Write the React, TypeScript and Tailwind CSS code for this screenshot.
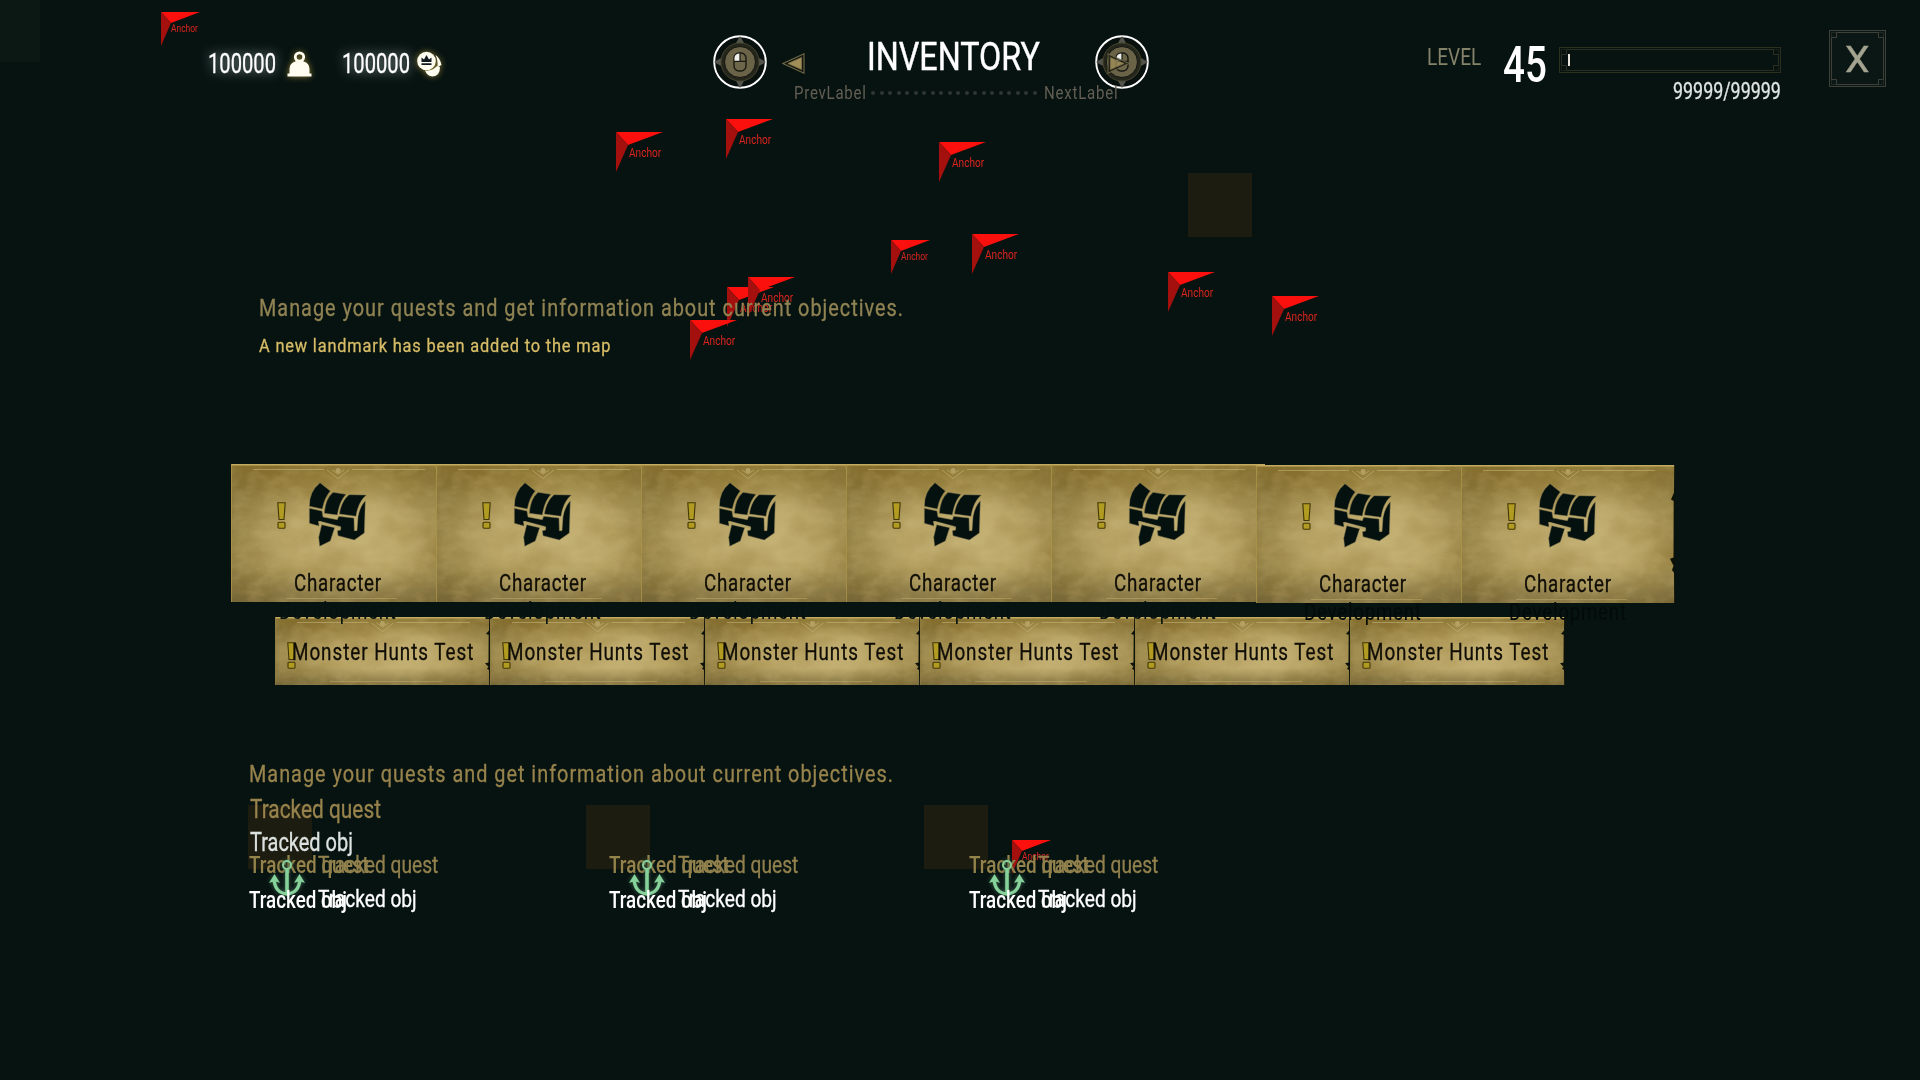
import { useLayoutEffect, useRef, useState } from "react"
import type { ReactNode } from "react"
import { clsx } from "clsx"

interface FitTextProps {
  width: number
  className?: string
  children: string
}

// Condenses a line of text horizontally so that it fills the given width.
function FitText({ width, className, children }: FitTextProps) {
  const ref = useRef<HTMLSpanElement>(null)
  const [scale, setScale] = useState(1)

  useLayoutEffect(() => {
    if (ref.current) setScale(width / ref.current.offsetWidth)
  }, [width, children])

  return (
    <span className={clsx("block shrink-0 leading-none", className)} style={{ width }}>
      <span ref={ref} className="inline-block origin-left whitespace-nowrap align-top" style={{ transform: `scaleX(${scale})` }}>
        {children}
      </span>
    </span>
  )
}

const anchors = [
  { x: 161, y: 12, small: true },
  { x: 616, y: 132 },
  { x: 726, y: 119 },
  { x: 939, y: 142 },
  { x: 891, y: 240, small: true },
  { x: 972, y: 234 },
  { x: 727, y: 287 },
  { x: 748, y: 277 },
  { x: 690, y: 320 },
  { x: 1168, y: 272 },
  { x: 1272, y: 296 },
  { x: 1012, y: 840, small: true },
]

const slots = [
  { x: 1188, y: 173 },
  { x: 248, y: 805 },
  { x: 586, y: 805 },
  { x: 924, y: 805 },
]

function AnchorPin({ small }: { small?: boolean }) {
  return (
    <div className={clsx("relative", small ? "h-[34px] w-[39px]" : "h-10 w-[47px]")}>
      <svg viewBox="0 0 47 40" className="block h-full w-full" preserveAspectRatio="none">
        <path d="M0 0H47L12 13Z" fill="#fb100d" />
        <path d="M0 0L12 13L0 40Z" fill="#a3100d" />
      </svg>
      <div className={clsx("absolute text-[#dc241e]", small ? "left-2.5 top-[12px] text-[10px]" : "left-[12.5px] top-[15px] text-[12px]")}>
        <FitText width={small ? 27 : 32}>Anchor</FitText>
      </div>
    </div>
  )
}

function WeightIcon() {
  return (
    <svg viewBox="0 0 25 26" className="h-[26px] w-[25px] drop-shadow-[0_0_3px_#8a7a30]">
      <circle cx="12.5" cy="6" r="4.2" fill="none" stroke="#fffef0" strokeWidth="2.8" />
      <path d="M9 9.5H16L16.5 10.500Q22.500 12 22.500 18V22.500H24.500V25.500H.5V22.500H2.500V18Q2.500 12 8.500 10.500Z" fill="#fffef0" />
    </svg>
  )
}

function CoinsIcon() {
  return (
    <svg viewBox="0 0 26 26" className="h-[26px] w-[26px] drop-shadow-[0_0_3px_#8a7a30]">
      <path d="M18.500 4Q23 7 24.500 14L20.500 16Q21 9 18.500 4Z" fill="#fffef0" />
      <path d="M8 19.500Q15 20.500 20 15L23 16Q23 25 15.500 25.500Q10 25 8 19.500Z" fill="#fffef0" />
      <circle cx="9.500" cy="10" r="9.300" fill="#fffef0" />
      <path d="M4.500 6.500L7 8.500L9.500 4L12 8.500L14.500 6.500V11H4.500ZM4.500 12.200H14.500V14H4.500Z" fill="#101a20" />
    </svg>
  )
}

function MouseMedallion() {
  return (
    <svg viewBox="0 0 54 54" className="block h-[54px] w-[54px] shrink-0">
      <circle cx="27" cy="27" r="25.800" fill="#09110f" stroke="#fff" strokeWidth="1.900" />
      <g fill="#53544b">
        <path d="M27 1L31 8H23ZM27 53L31 46H23ZM1 27L8 23V31ZM53 27L46 23V31Z" />
      </g>
      <circle cx="27" cy="27" r="19" fill="#24251b" stroke="#47462f" />
      <circle cx="27" cy="27" r="15.500" fill="#6b6347" stroke="#111510" strokeWidth="1" />
      <rect x="21" y="18" width="12" height="18" rx="5" fill="#6e6649" stroke="#181a13" strokeWidth="1.400" />
      <path d="M27 18.500V26H21.500V23Q21.500 18.500 27 18.500Z" fill="#f0f0ec" />
      <path d="M21 26.300H33M27 18V26" stroke="#181a13" strokeWidth="1.200" />
    </svg>
  )
}

function ArrowIcon({ className }: { className?: string }) {
  return (
    <svg viewBox="0 0 23 21" className={clsx("block h-[21px] w-[23px] shrink-0", className)}>
      <path d="M.8 10.500L22 .8V20.200Z" fill="#16180f" stroke="#6f6848" strokeWidth="1.100" />
      <path d="M6 10.500L19.500 4.500V16.500Z" fill="#a08d58" stroke="#7f7349" strokeWidth=".8" />
    </svg>
  )
}

function ChestIcon() {
  return (
    <svg viewBox="0 0 240 300" className="block h-[100px] w-20">
      <g fill="#04110f" stroke="#8a7f54" strokeWidth="1.500" strokeLinejoin="round">
        <path d="M60 68L91 93Q74 112 67 147L28 139Q27 95 60 68Z" />
        <path d="M99 97L138 103Q118 125 112 165L73 160Q75 118 99 97Z" />
        <path d="M147 104L199 105Q174 126 168 169L118 162Q123 124 147 104Z" />
        <path d="M28 145L66 153L69 171L112 179L116 169L162 174L163 212H171L174 170Q180 138 196 122L193 219L163 240L114 227L112 212L122 210V200L60 184L56 187L57 198L28 190Z" />
        <path d="M65 194L104 203L91 243L59 259L56 232Z" />
      </g>
      <path d="M55 185L121 204" stroke="#b3a36a" strokeWidth="4" />
    </svg>
  )
}

function QuestMark({ className }: { className?: string }) {
  return (
    <svg viewBox="0 0 9 27" className={clsx("absolute z-10 h-[27px] w-[9px]", className)}>
      <g fill="#b19b20" stroke="#423707" strokeWidth="1.100">
        <path d="M.8.8H8.200L7 17.500H2Z" />
        <rect x="1" y="20.200" width="7" height="6" rx="1" />
      </g>
    </svg>
  )
}

interface ParchmentProps {
  width: number
  height: number
  torn?: boolean
  last?: boolean
}

function Parchment({ width, height, torn, last }: ParchmentProps) {
  const mid = width / 2
  return (
    <svg viewBox={`0 0 ${width} ${height}`} className="absolute inset-0 block h-full w-full">
      <rect width={width} height={height} fill="url(#paper)" />
      <rect width={width} height={height} fill="url(#paper-shade)" />
      <rect width={width} height={height} filter="url(#paper-stain)" />
      <rect width={width} height={height} filter="url(#paper-grain)" />
      <path d={`M0 .7H${width}`} stroke="#c2ab60" strokeWidth="1.400" />
      <path d={`M22 5.500H${mid - 14}M${mid + 14} 5.500H${width - 20}M${mid - 11} 6L${mid} 14.500L${mid + 11} 6M${mid - 6} 6L${mid} 10L${mid + 6} 6`} fill="none" stroke="#cfbd82" strokeOpacity=".5" />
      <circle cx={mid} cy="6.500" r="2.500" fill="#c8b67c" fillOpacity=".6" />
      <path d={`M55 ${height - 3.500}H${width - 48}`} stroke="#bda768" strokeOpacity=".55" />
      <path d={`M.5 0V${height}`} stroke={torn ? "#8f7c40" : "#b09948"} strokeOpacity=".7" />
      {(torn || last) && (
        <path
          d={`M${width} 0V${height}H${width - 0.8}L${width - 1} ${height * 0.78}L${width - 3} ${height * 0.76}L${width - 1.5} ${height * 0.73}L${width - 5} ${height * 0.68}L${width - 1.5} ${height * 0.67}L${width - 1.3} ${height * 0.26}L${width - 4} ${height * 0.25}L${width - 1} ${height * 0.2}L${width - 0.8} 0Z`}
          fill="#0d1209"
        />
      )}
    </svg>
  )
}

function PaperDefs() {
  return (
    <svg className="absolute h-0 w-0">
      <defs>
        <radialGradient id="paper" cx=".54" cy=".56" r=".64">
          <stop offset="0" stopColor="#c5b276" />
          <stop offset=".45" stopColor="#baa667" />
          <stop offset=".8" stopColor="#9a874b" />
          <stop offset="1" stopColor="#83713b" />
        </radialGradient>
        <linearGradient id="paper-shade" x1="0" y1="0" x2="0" y2="1">
          <stop offset="0" stopColor="#8d742a" stopOpacity=".5" />
          <stop offset=".3" stopColor="#8d752c" stopOpacity="0" />
          <stop offset=".75" stopColor="#6d6036" stopOpacity="0" />
          <stop offset="1" stopColor="#6d6036" stopOpacity=".55" />
        </linearGradient>
        <filter id="paper-stain" x="0" y="0" width="100%" height="100%" colorInterpolationFilters="sRGB">
          <feTurbulence type="fractalNoise" baseFrequency=".018 .026" numOctaves="3" seed="8" />
          <feColorMatrix values="0 0 0 0 .5  0 0 0 0 .39  0 0 0 0 .12  .8 0 0 0 -.33" />
        </filter>
        <filter id="paper-grain" x="0" y="0" width="100%" height="100%" colorInterpolationFilters="sRGB">
          <feTurbulence type="fractalNoise" baseFrequency=".06 .09" numOctaves="4" seed="3" />
          <feColorMatrix values="0 0 0 0 .82  0 0 0 0 .74  0 0 0 0 .5  0 .5 0 0 -.2" />
        </filter>
      </defs>
    </svg>
  )
}

function CategoryTile({ index }: { index: number }) {
  const lowered = index > 4
  return (
    <div className={clsx("relative -mr-[9px] h-[138px] w-[214px] shrink-0", lowered && "mt-px")}>
      <Parchment width={214} height={138} last={index === 6} />
      <QuestMark className="left-[46px] top-[38px]" />
      <div className="relative -mt-1 ml-[69px]">
        <ChestIcon />
      </div>
      {/* second line of the label hangs below the tile */}
      <div className="relative flex flex-col items-center gap-[5px] pt-[11.500px] text-[23px] tracking-[.04em]">
        <FitText width={88} className="text-[#100e06] [-webkit-text-stroke:.3px]">Character</FitText>
        <FitText width={118} className={lowered ? "text-[#030b08]" : "text-[#061210]"}>Development</FitText>
      </div>
    </div>
  )
}

function HuntTile({ children }: { children: string }) {
  return (
    <div className="relative h-[68px] w-[215px] shrink-0 pl-[17px] pt-6">
      <Parchment width={215} height={68} torn />
      <QuestMark className="left-3 top-[25px]" />
      <FitText width={182} className="relative z-20 text-[23px] tracking-[.05em] text-[#100e06] [-webkit-text-stroke:.3px]">{children}</FitText>
    </div>
  )
}

function GreenAnchor() {
  return (
    <svg viewBox="0 0 40 38" className="absolute left-[18px] top-[6px] h-[38px] w-10 drop-shadow-[0_0_2px_#3f6a50]">
      <g fill="none" stroke="#87d29a">
        <circle cx="20" cy="5" r="4" strokeWidth="2" />
        <path d="M20 9V35" strokeWidth="3.600" />
        <path d="M7 19Q8 33 20 34Q32 33 33 19" strokeWidth="3.400" />
      </g>
      <path d="M7.500 14L13 23Q8 20 2 23ZM32.500 14L38 23Q32 20 27 23Z" fill="#87d29a" />
    </svg>
  )
}

function TrackedEntry() {
  return (
    <div className="relative w-[360px] shrink-0">
      <div className="relative text-[23px]">
        <FitText width={120} className="font-medium text-[#94834b]">Tracked quest</FitText>
        <div className="absolute left-[69px] top-0 text-[#91804d] [-webkit-text-stroke:.3px]">
          <FitText width={120}>Tracked quest</FitText>
        </div>
      </div>
      <GreenAnchor />
      <div className="relative mt-3 text-[23px] text-white">
        <FitText width={98} className="font-medium">Tracked obj</FitText>
        <div className="absolute -top-px left-[69px] [-webkit-text-stroke:.3px]">
          <FitText width={99}>Tracked obj</FitText>
        </div>
      </div>
    </div>
  )
}

function NotchedFrame({ width, height, color, children }: { width: number; height: number; color: string; children?: ReactNode }) {
  const r = width - 2.5
  const b = height - 2.5
  return (
    <svg viewBox={`0 0 ${width} ${height}`} className="absolute inset-0 block h-full w-full">
      <g fill="none" stroke={color}>
        <rect x=".5" y=".5" width={width - 1} height={height - 1} />
        <path d={`M7.500 2.500H${r - 5}V7.500H${r}V${b - 5}H${r - 5}V${b}H7.500V${b - 5}H2.500V7.500H7.500Z`} />
        <path d={`M2.500 2.500H7.500V7.500H2.500ZM${r - 5} 2.500H${r}V7.500H${r - 5}ZM2.500 ${b - 5}H7.500V${b}H2.500ZM${r - 5} ${b - 5}H${r}V${b}H${r - 5}Z`} strokeOpacity=".45" />
      </g>
      {children}
    </svg>
  )
}

function Header() {
  return (
    <header className="relative flex h-28 shrink-0 items-start pl-[208px] text-white">
      <FitText width={68} className="mt-[51px] text-[27px] [-webkit-text-stroke:.3px] [text-shadow:0_0_14px_#a9b4b0]">100000</FitText>
      <div className="ml-[11px] mt-[51px]"><WeightIcon /></div>
      <FitText width={68} className="ml-[30px] mt-[51px] text-[27px] [-webkit-text-stroke:.3px] [text-shadow:0_0_14px_#a9b4b0]">100000</FitText>
      <div className="ml-[7px] mt-[51px]"><CoinsIcon /></div>

      <nav className="ml-[270px] mt-[35px] w-[436px] shrink-0">
        <div className="flex h-[54px] items-start">
          <MouseMedallion />
          <ArrowIcon className="ml-[15px] mt-[18px]" />
          <FitText width={173} className="ml-[62px] mt-[3px] text-[39px] [-webkit-text-stroke:.4px]">INVENTORY</FitText>
          <div className="relative ml-[55px]">
            <MouseMedallion />
            <ArrowIcon className="absolute left-3 top-[18px] -scale-x-100 opacity-80" />
          </div>
        </div>
        <div className="relative -mt-1 flex items-start pl-[81px] text-[17.5px] tracking-[.05em] text-[#635f54]">
          <FitText width={73}>PrevLabel</FitText>
          <div className="ml-1 mt-[6px] flex gap-[4.500px]">
            {Array.from({ length: 20 }, (_, i) => (
              <span key={i} className="h-1 w-1 shrink-0 rounded-full bg-[#2f3633]" />
            ))}
          </div>
          <FitText width={74} className="ml-[7px]">NextLabel</FitText>
        </div>
      </nav>

      <FitText width={54} className="ml-[278px] mt-[45px] text-[24px] text-[#85836a]">LEVEL</FitText>
      <FitText width={44} className="ml-[22px] mt-10 text-[50px] font-medium">45</FitText>
      <div className="ml-3 mt-[47px] flex w-[222px] shrink-0 flex-col items-end">
        <div className="relative h-[26px] w-full pl-[9px] pt-[7px]">
          <NotchedFrame width={222} height={26} color="#2c2f1f" />
          <div className="h-3 w-0.5 bg-[#e8e6da]" />
        </div>
        <FitText width={108} className="mt-[7px] text-[23px] text-[#dfe5e2] [-webkit-text-stroke:.3px]">99999/99999</FitText>
      </div>
      <button type="button" className="relative ml-12 mt-[30px] flex h-[57px] w-[57px] shrink-0 justify-center bg-[#0a1715] pr-[2px] pt-3">
        <NotchedFrame width={57} height={57} color="#3f4138" />
        <FitText width={25} className="relative text-[36px] text-[#a3a390] [-webkit-text-stroke:.4px]">X</FitText>
      </button>
    </header>
  )
}

export default function App() {
  return (
    <div className="relative flex h-[1080px] w-[1920px] flex-col overflow-hidden bg-[#071311] font-['Roboto',sans-serif]">
      <PaperDefs />
      <div className="absolute left-0 top-0 h-[62px] w-10 bg-[#0b1814]" />
      {slots.map((s) => (
        <div key={s.x} className="absolute h-16 w-16 bg-[#1c1c11]" style={{ left: s.x, top: s.y }} />
      ))}
      {anchors.map((a) => (
        <div key={`${a.x}-${a.y}`} className="absolute" style={{ left: a.x, top: a.y }}>
          <AnchorPin small={a.small} />
        </div>
      ))}

      <Header />

      <main className="relative flex flex-col">
        <div className="pl-[259px] pt-[184px] [-webkit-text-stroke:.3px]">
          <FitText width={645} className="text-[24px] tracking-[.05em] text-[#908353]">Manage your quests and get information about current objectives.</FitText>
          <FitText width={352} className="mt-[17px] h-[17px] text-[18.5px] tracking-[.05em] text-[#d8bd67]">A new landmark has been added to the map</FitText>
        </div>

        <div className="relative z-10 mt-[110px] flex h-[138px] items-start pl-[231px]">
          {Array.from({ length: 7 }, (_, i) => <CategoryTile key={i} index={i} />)}
        </div>
        <div className="mt-[15px] flex pl-[275px]">
          {Array.from({ length: 6 }, (_, i) => <HuntTile key={i}>Monster Hunts Test</HuntTile>)}
        </div>

        <div className="pl-[248.500px] pt-[77px]">
          <FitText width={645} className="text-[24px] tracking-[.05em] text-[#97834c] [-webkit-text-stroke:.3px]">Manage your quests and get information about current objectives.</FitText>
          <div className="pl-[1.500px] pt-[11px] text-[25px] [-webkit-text-stroke:.3px]">
            <FitText width={131} className="text-[#97834c]">Tracked quest</FitText>
            <FitText width={103} className="mt-2 text-[#dce2df]">Tracked obj</FitText>
          </div>
          <div className="-mt-px flex">
            <TrackedEntry />
            <TrackedEntry />
            <TrackedEntry />
          </div>
        </div>
      </main>
    </div>
  )
}
